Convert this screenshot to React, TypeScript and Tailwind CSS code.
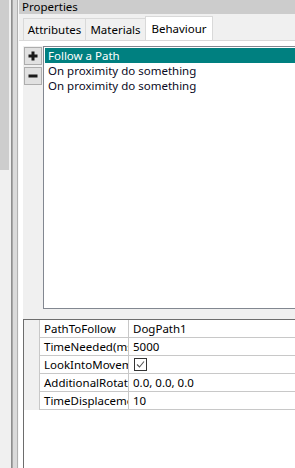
import React from 'react';

const font = { fontFamily: '"Noto Sans", "Open Sans", sans-serif' };

const props: { name: string; value: string; check?: boolean }[] = [
  { name: 'PathToFollow', value: 'DogPath1' },
  { name: 'TimeNeeded(ms)', value: '5000' },
  { name: 'LookIntoMovement', value: '', check: true },
  { name: 'AdditionalRotation', value: '0.0, 0.0, 0.0' },
  { name: 'TimeDisplacement', value: '10' },
];

const behaviours = ['Follow a Path', 'On proximity do something', 'On proximity do something'];

function Splitter() {
  return (
    <div className="flex h-full shrink-0">
      <div className="w-px bg-[#8e8e8e]" />
      <div className="w-px bg-[#a8a8a8]" />
      <div className="w-[4px] bg-[#dadada]" />
      <div className="w-px bg-[#b0b0b0]" />
      <div className="w-px bg-[#f8f8f8]" />
    </div>
  );
}

function Tab({ label, active, w }: { label: string; active?: boolean; w: string }) {
  if (active) {
    return (
      <div className={`${w} h-[25px] -mb-px bg-white border border-b-0 border-[#d9d9d9] flex items-center justify-center leading-none`}>
        {label}
      </div>
    );
  }
  return (
    <div className={`${w} h-[22px] bg-[#f0f0f0] border border-b-0 border-r-0 border-[#d9d9d9] flex items-center justify-center leading-none`}>
      {label}
    </div>
  );
}

function SquareButton({ kind }: { kind: 'plus' | 'minus' }) {
  return (
    <div className="w-[18px] h-[18px] bg-[#e1e1e1] border border-[#adadad] flex items-center justify-center">
      <svg width="10" height="10" viewBox="0 0 10 10">
        <rect x="0.5" y="3.5" width="9" height="3" fill="#1a1a1a" />
        {kind === 'plus' && <rect x="3.5" y="0.5" width="3" height="9" fill="#1a1a1a" />}
      </svg>
    </div>
  );
}

export default function App() {
  return (
    <div className="w-[295px] h-[468px] flex bg-[#f0f0f0] overflow-hidden text-[11.5px] text-black" style={font}>
      {/* scrollbar */}
      <div className="w-[11px] shrink-0 bg-[#f0f0f0]">
        <div className="w-[9px] h-[170px] bg-[#cdcdcd]" />
      </div>
      <Splitter />

      <div className="flex-1 flex flex-col min-w-0">
        <div className="h-[14px] bg-[#cccccc] pl-[3px] leading-[14px] whitespace-nowrap">Properties</div>

        {/* tab strip */}
        <div className="h-[26px] flex items-end pl-[4px] pt-[2px]">
          <Tab label="Attributes" w="w-[62px]" />
          <Tab label="Materials" w="w-[60px]" />
          <Tab label="Behaviour" active w="w-[68px]" />
        </div>

        {/* tab page */}
        <div className="flex-1 flex flex-col bg-white border-t border-[#d9d9d9] pl-[4px] pt-[5px]">
          <div className="flex-1 flex flex-col bg-[#f0f0f0]">
            <div className="h-[263px] flex">
              <div className="w-[20px] shrink-0 flex flex-col gap-[2px] pt-[1px] pl-px">
                <SquareButton kind="plus" />
                <SquareButton kind="minus" />
              </div>
              <div className="flex-1 bg-white border-l border-t border-b border-[#828790] pt-px pl-px">
                {behaviours.map((b, i) => (
                  <div
                    key={i}
                    className={`h-[15px] leading-[15px] pl-[3px] whitespace-nowrap ${i === 0 ? 'bg-[#008080] text-white' : 'text-[#0a0a23]'}`}
                  >
                    {b}
                  </div>
                ))}
              </div>
            </div>

            <div className="h-[10px]" />

            {/* property grid */}
            <div className="flex-1 bg-white border-l border-t border-[#6d6d6d]">
              {props.map((p) => (
                <div key={p.name} className="h-[18px] flex">
                  <div className="w-[16px] shrink-0 bg-[#f0f0f0] border-r border-[#c8c8c8]" />
                  <div className="w-[89px] shrink-0 border-r border-b border-[#c8c8c8] pl-[4px] leading-[17px] whitespace-nowrap overflow-hidden">
                    {p.name}
                  </div>
                  <div className="flex-1 border-b border-[#c8c8c8] pl-[4px] leading-[17px] whitespace-nowrap overflow-hidden flex items-center">
                    {p.check ? (
                      <div className="w-[13px] h-[13px] border border-[#333333] bg-white ml-px flex items-center justify-center">
                        <svg width="11" height="11" viewBox="0 0 11 11">
                          <path d="M2 5.5 L4.5 8 L9 2.5" fill="none" stroke="#555" strokeWidth="1.1" />
                        </svg>
                      </div>
                    ) : (
                      p.value
                    )}
                  </div>
                </div>
              ))}
            </div>
          </div>
        </div>
      </div>
    </div>
  );
}
